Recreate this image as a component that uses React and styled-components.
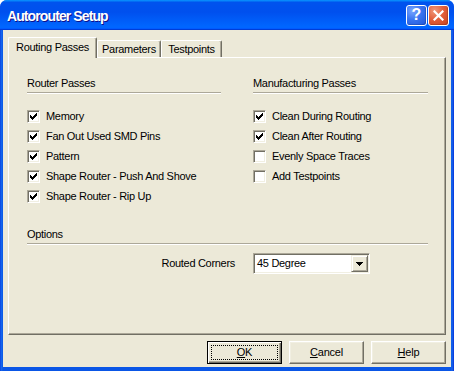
import React from "react";
import styled, { createGlobalStyle } from "styled-components";

const Global = createGlobalStyle`
  html, body { margin: 0; padding: 0; background: #ffffff; }
  body { font-family: "Liberation Sans", Arial, sans-serif; font-size: 11px; color: #000; }
`;

const Window = styled.div`
  width: 454px;
  height: 371px;
  box-sizing: border-box;
  display: flex;
  flex-direction: column;
  border-radius: 7px 7px 0 0;
  background: linear-gradient(90deg, #0831d9 0, #166aee 1px, #0a56e6 3px, #0a56e6 451px, #166aee 452px, #0831d9 454px);
  overflow: hidden;
`;

const TitleBar = styled.div`
  height: 30px;
  flex: 0 0 30px;
  display: flex;
  align-items: center;
  padding: 0 5px 0 7px;
  background: linear-gradient(180deg, #0997ff, #0053ee 8%, #0050ee 40%, #0066ff 88%, #0066ff 93%, #005bff 95%, #003dd7 96%, #003dd7);
`;

const Title = styled.div`
  flex: 1;
  color: #fff;
  font-family: "Liberation Sans", Arial, sans-serif;
  font-weight: bold;
  font-size: 14px;
  letter-spacing: -0.9px;
  text-shadow: 1px 1px #0f1089;
  margin-top: 1px;
`;

const CaptionButton = styled.div`
  width: 21px;
  height: 21px;
  box-sizing: border-box;
  border: 1px solid #fff;
  border-radius: 3px;
  margin-left: 1px;
  display: flex;
  align-items: center;
  justify-content: center;
  color: #fff;
  font-family: "Liberation Sans", Arial, sans-serif;
  font-weight: bold;
  font-size: 16px;
  background: ${(p) =>
    p.$close
      ? "radial-gradient(circle at 30% 25%, #f0987a 0, #e2603c 45%, #c8401c 100%)"
      : "radial-gradient(circle at 30% 25%, #7aa7ff 0, #3a75f0 45%, #1f55d8 100%)"};
  box-shadow: inset -1px -1px rgba(0,0,0,0.15);
`;

const Body = styled.div`
  flex: 1;
  margin: 0 3px 4px 3px;
  background: #ece9d8;
  padding: 7px 5px 0 5px;
  display: flex;
  flex-direction: column;
`;

const TabStrip = styled.div`
  display: flex;
  align-items: flex-start;
  height: 20px;
`;

const Tab = styled.div`
  position: relative;
  box-sizing: border-box;
  width: ${(p) => p.$w}px;
  height: ${(p) => (p.$active ? 21 : 17)}px;
  margin-top: ${(p) => (p.$active ? 0 : 3)}px;
  z-index: ${(p) => (p.$active ? 2 : 1)};
  background: #ece9d8;
  border-top: 1px solid #fff;
  border-left: 1px solid #fff;
  border-right: 1px solid #716f64;
  box-shadow: inset -1px 0 #aca899;
  border-radius: 2px 2px 0 0;
  text-align: center;
  line-height: 13px;
  padding-top: ${(p) => (p.$active ? 3 : 2)}px;
  letter-spacing: -0.3px;
  white-space: nowrap;
`;

const Panel = styled.div`
  box-sizing: border-box;
  height: 278px;
  border-top: 1px solid #fff;
  border-left: 1px solid #fff;
  border-right: 1px solid #716f64;
  border-bottom: 1px solid #716f64;
  box-shadow: inset -1px -1px #aca899;
  padding: 19px 17px 0 18px;
  letter-spacing: -0.3px;
`;

const Columns = styled.div`
  display: grid;
  grid-template-columns: 194px 1fr;
  column-gap: 32px;
`;

const Group = styled.div`
  display: flex;
  flex-direction: column;
`;

const Heading = styled.div`
  line-height: 13px;
  height: 13px;
`;

const Separator = styled.div`
  height: 1px;
  margin-top: 2px;
  background: #aca899;
  border-bottom: 1px solid #fff;
`;

const List = styled.div`
  display: flex;
  flex-direction: column;
  margin-top: ${(p) => p.$top}px;
`;

const Row = styled.div`
  height: 20px;
  display: flex;
  align-items: center;
  gap: 6px;
  white-space: nowrap;
`;

const Box = styled.div`
  width: 13px;
  height: 13px;
  box-sizing: border-box;
  flex: 0 0 13px;
  background: #fff;
  border: 1px solid;
  border-color: #aca899 #fff #fff #aca899;
  box-shadow: inset 1px 1px #716f64, inset -1px -1px #f1efe2;
  display: flex;
  align-items: center;
  justify-content: center;
`;

const Label = styled.span`
  line-height: 13px;
`;

const OptionsSection = styled.div`
  margin-top: 22px;
  display: flex;
  flex-direction: column;
`;

const OptionRow = styled.div`
  display: grid;
  grid-template-columns: 226px 1fr;
  align-items: center;
  margin-top: 8px;
`;

const OptionLabel = styled.span`
  justify-self: end;
  padding-right: 18px;
  line-height: 13px;
`;

const Select = styled.div`
  width: 117px;
  height: 21px;
  box-sizing: border-box;
  background: #fff;
  border: 1px solid;
  border-color: #aca899 #fff #fff #aca899;
  box-shadow: inset 1px 1px #716f64, inset -1px -1px #f1efe2;
  display: flex;
  align-items: center;
  padding: 1px 1px 1px 3px;
`;

const SelectText = styled.span`
  flex: 1;
  line-height: 13px;
`;

const DropButton = styled.div`
  width: 17px;
  height: 17px;
  box-sizing: border-box;
  background: #ece9d8;
  border: 1px solid;
  border-color: #f1efe2 #716f64 #716f64 #f1efe2;
  box-shadow: inset 1px 1px #fff, inset -1px -1px #aca899;
  display: flex;
  align-items: center;
  justify-content: center;
`;

const ButtonRow = styled.div`
  display: flex;
  justify-content: flex-end;
  gap: 7px;
  margin-top: 6px;
`;

const Button = styled.div`
  position: relative;
  width: 75px;
  height: 23px;
  box-sizing: border-box;
  background: #ece9d8;
  border: 1px solid;
  border-color: ${(p) => (p.$default ? "#000" : "#fff #716f64 #716f64 #fff")};
  box-shadow: ${(p) =>
    p.$default
      ? "inset 1px 1px #fff, inset -1px -1px #716f64, inset -2px -2px #aca899"
      : "inset -1px -1px #aca899, inset 1px 1px #f1efe2"};
  display: flex;
  align-items: center;
  justify-content: center;
  line-height: 13px;
  letter-spacing: -0.2px;
  &::after {
    content: "";
    display: ${(p) => (p.$default ? "block" : "none")};
    position: absolute;
    left: 3px;
    right: 3px;
    top: 3px;
    bottom: 3px;
    border: 1px dotted #000;
  }
`;

const U = styled.span`
  text-decoration: underline;
`;

const Check = () => (
  <svg width="7" height="7" viewBox="0 0 7 7" shapeRendering="crispEdges">
    <path d="M0 2h1v3H0zM1 3h1v3H1zM2 4h1v3H2zM3 3h1v3H3zM4 2h1v3H4zM5 1h1v3H5zM6 0h1v3H6z" fill="#000" />
  </svg>
);

const CheckRow = ({ checked, children }) => (
  <Row>
    <Box>{checked && <Check />}</Box>
    <Label>{children}</Label>
  </Row>
);

export default function App() {
  return (
    <>
      <Global />
      <Window>
        <TitleBar>
          <Title>Autorouter Setup</Title>
          <CaptionButton>?</CaptionButton>
          <CaptionButton $close>
            <svg width="11" height="11" viewBox="0 0 11 11">
              <path d="M1.5 1.5L9.5 9.5M9.5 1.5L1.5 9.5" stroke="#fff" strokeWidth="2.2" strokeLinecap="square" />
            </svg>
          </CaptionButton>
        </TitleBar>
        <Body>
          <TabStrip>
            <Tab $active $w={89}>Routing Passes</Tab>
            <Tab $w={64}>Parameters</Tab>
            <Tab $w={61}>Testpoints</Tab>
          </TabStrip>
          <Panel>
            <Columns>
              <Group>
                <Heading>Router Passes</Heading>
                <Separator />
                <List $top={12}>
                  <CheckRow checked>Memory</CheckRow>
                  <CheckRow checked>Fan Out Used SMD Pins</CheckRow>
                  <CheckRow checked>Pattern</CheckRow>
                  <CheckRow checked>Shape Router - Push And Shove</CheckRow>
                  <CheckRow checked>Shape Router - Rip Up</CheckRow>
                </List>
              </Group>
              <Group>
                <Heading>Manufacturing Passes</Heading>
                <Separator />
                <List $top={12}>
                  <CheckRow checked>Clean During Routing</CheckRow>
                  <CheckRow checked>Clean After Routing</CheckRow>
                  <CheckRow>Evenly Space Traces</CheckRow>
                  <CheckRow>Add Testpoints</CheckRow>
                </List>
              </Group>
            </Columns>
            <OptionsSection>
              <Heading>Options</Heading>
              <Separator />
              <OptionRow>
                <OptionLabel>Routed Corners</OptionLabel>
                <Select>
                  <SelectText>45 Degree</SelectText>
                  <DropButton>
                    <svg width="7" height="4" viewBox="0 0 7 4" shapeRendering="crispEdges">
                      <path d="M0 0h7v1H0zM1 1h5v1H1zM2 2h3v1H2zM3 3h1v1H3z" fill="#000" />
                    </svg>
                  </DropButton>
                </Select>
              </OptionRow>
            </OptionsSection>
          </Panel>
          <ButtonRow>
            <Button $default><span><U>O</U>K</span></Button>
            <Button><span><U>C</U>ancel</span></Button>
            <Button><span><U>H</U>elp</span></Button>
          </ButtonRow>
        </Body>
      </Window>
    </>
  );
}
